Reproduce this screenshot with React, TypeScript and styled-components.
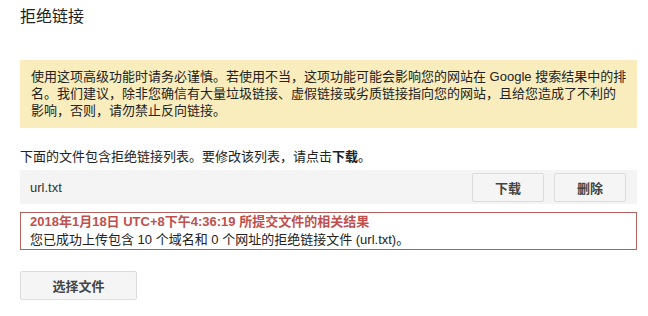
import React from 'react'
import styled, { createGlobalStyle } from 'styled-components'

const GlobalStyle = createGlobalStyle`
    body {
        margin: 0;
        background: #fff;
        font-family: "Liberation Sans", "Noto Sans CJK SC", sans-serif;
        font-size: 13px;
        color: #222;
    }
`;

const Page = styled.div`
    width: 617px;
    padding: 0 11px 0 20px;
`;

const Title = styled.h2`
    margin: 0;
    padding-top: 6px;
    font-size: 16px;
    line-height: 22px;
    font-weight: normal;
    color: #222;
`;

const Warning = styled.div`
    margin-top: 32px;
    padding: 8px 4px 9px 11px;
    background: #f9edbe;
    line-height: 17px;
    color: #222;
    white-space: nowrap;
`;

const Intro = styled.p`
    margin: 20px 0 0 0;
    line-height: 17px;
`;

const FileRow = styled.div`
    margin-top: 5px;
    height: 34px;
    padding: 0 11px 0 10px;
    display: flex;
    align-items: center;
    background: #f4f4f4;
`;

const FileName = styled.span`
    flex: 1;
    color: #333;
`;

const Actions = styled.div`
    display: flex;
    gap: 10px;
`;

const Button = styled.button<{ $width: number }>`
    width: ${p => p.$width}px;
    height: 29px;
    padding: 0;
    border: 1px solid #dcdcdc;
    border-radius: 2px;
    background: #f5f5f5;
    font-family: inherit;
    font-size: 13px;
    font-weight: bold;
    color: #444;
    cursor: pointer;
`;

const Result = styled.div`
    margin-top: 8px;
    padding: 0 9px;
    border: 1px solid #b5625e;
    line-height: 18px;
`;

const ResultTitle = styled.div`
    font-weight: bold;
    color: #c0504d;
`;

const ChooseWrap = styled.div`
    margin-top: 21px;
`;

const App: React.FC = () => {
    return (
        <Page>
            <GlobalStyle />
            <Title>拒绝链接</Title>
            <Warning>
                使用这项高级功能时请务必谨慎。若使用不当，这项功能可能会影响您的网站在 Google 搜索结果中的排<br />
                名。我们建议，除非您确信有大量垃圾链接、虚假链接或劣质链接指向您的网站，且给您造成了不利的<br />
                影响，否则，请勿禁止反向链接。
            </Warning>
            <Intro>下面的文件包含拒绝链接列表。要修改该列表，请点击<b>下载</b>。</Intro>
            <FileRow>
                <FileName>url.txt</FileName>
                <Actions>
                    <Button $width={72}>下载</Button>
                    <Button $width={72}>删除</Button>
                </Actions>
            </FileRow>
            <Result>
                <ResultTitle>2018年1月18日 UTC+8下午4:36:19 所提交文件的相关结果</ResultTitle>
                <div>您已成功上传包含 10 个域名和 0 个网址的拒绝链接文件 (url.txt)。</div>
            </Result>
            <ChooseWrap>
                <Button $width={117}>选择文件</Button>
            </ChooseWrap>
        </Page>
    );
};

export default App;
